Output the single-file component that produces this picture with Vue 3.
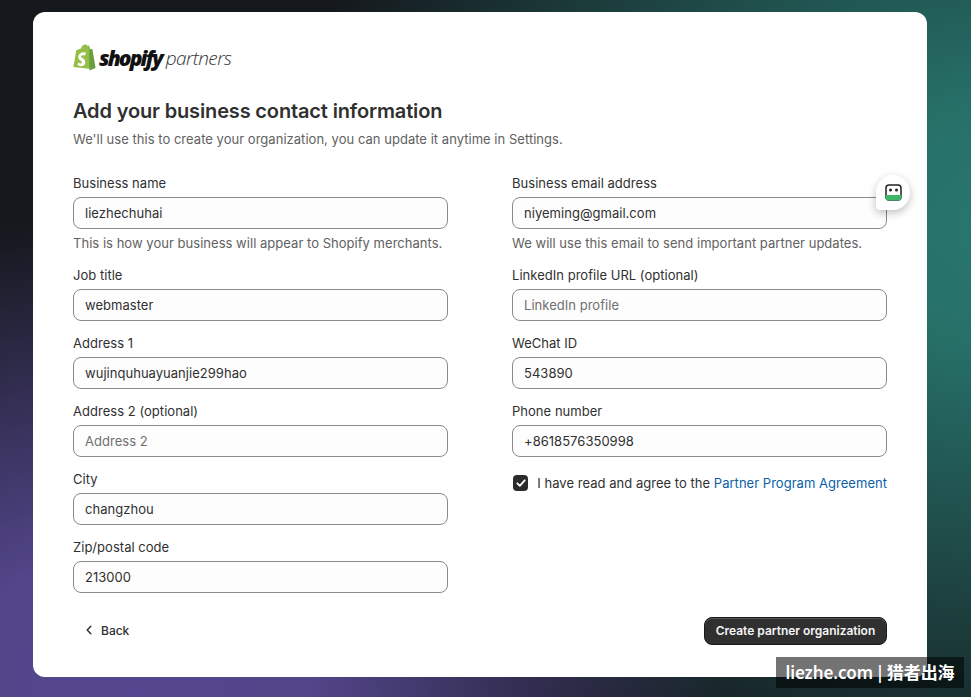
<script setup>
const left = [
  { label: 'Business name', value: 'liezhechuhai', help: 'This is how your business will appear to Shopify merchants.' },
  { label: 'Job title', value: 'webmaster' },
  { label: 'Address 1', value: 'wujinquhuayuanjie299hao' },
  { label: 'Address 2 (optional)', placeholder: 'Address 2' },
  { label: 'City', value: 'changzhou' },
  { label: 'Zip/postal code', value: '213000' },
]
const right = [
  { label: 'Business email address', value: 'niyeming@gmail.com', help: 'We will use this email to send important partner updates.' },
  { label: 'LinkedIn profile URL (optional)', placeholder: 'LinkedIn profile' },
  { label: 'WeChat ID', value: '543890' },
  { label: 'Phone number', value: '+8618576350998' },
]
</script>

<template>
  <div class="page">
    <main class="card">
      <div class="logo">
        <svg class="bag" width="23" height="27" viewBox="0 0 23 27">
          <path d="M3.2 6.2 8 4.6C8.6 2 10.4.5 12.2.5c1 0 1.700.5 2.200 1.300l1.700-.4L18.500 25 .4 23z" fill="#95bf47"/>
          <path d="M16.100 1.400 17 5l2.400.3L22.600 24 16.500 26.500z" fill="#6b9c3e"/>
          <path d="M12.700 9.400l-.8 2.300s-1-.5-2-.4c-1.700.1-1.700 1.100-1.700 1.400.1 1.400 3.900 1.700 4.100 5 .2 2.600-1.400 4.400-3.600 4.500-2.700.2-4.200-1.400-4.200-1.400l.6-2.400s1.500 1.100 2.700 1c.8 0 1-.7 1-1.100-.1-1.800-3.200-1.700-3.400-4.800-.2-2.500 1.500-5 5.100-5.300 1.400-.1 2.200.3 2.200.3z" fill="#fff"/>
        </svg>
        <span class="shopify">shopify</span>
        <span class="partners">partners</span>
      </div>

      <h1>Add your business contact information</h1>
      <p class="sub">We'll use this to create your organization, you can update it anytime in Settings.</p>

      <div class="columns">
        <div class="column">
          <div v-for="f in left" :key="f.label" class="field">
            <label>{{ f.label }}</label>
            <input type="text" :value="f.value" :placeholder="f.placeholder" />
            <p v-if="f.help" class="help">{{ f.help }}</p>
          </div>
        </div>
        <div class="column">
          <div v-for="f in right" :key="f.label" class="field">
            <label>{{ f.label }}</label>
            <input type="text" :value="f.value" :placeholder="f.placeholder" />
            <p v-if="f.help" class="help">{{ f.help }}</p>
          </div>
          <div class="agree">
            <span class="check">
              <svg width="12" height="12" viewBox="0 0 12 12"><path d="M2.300 6.300 4.800 8.800 9.700 3.300" fill="none" stroke="#fff" stroke-width="1.800" stroke-linecap="round" stroke-linejoin="round"/></svg>
            </span>
            <span>I have read and agree to the <a class="link">Partner Program Agreement</a></span>
          </div>
        </div>
      </div>

      <div class="actions">
        <button class="back">
          <svg width="16" height="16" viewBox="0 0 16 16"><path d="M9.800 4.300 6.200 8l3.600 3.700" fill="none" stroke="#303030" stroke-width="1.500" stroke-linecap="round" stroke-linejoin="round"/></svg>
          <span>Back</span>
        </button>
        <button class="primary">Create partner organization</button>
      </div>

      <div class="bot">
        <svg width="17" height="17" viewBox="0 0 17 17">
          <rect x="1" y="1" width="15" height="15" rx="3" fill="#fff" stroke="#222" stroke-width="1.500"/>
          <path d="M.500 11h16v2.500a3 3 0 0 1-3 3h-10a3 3 0 0 1-3-3z" fill="#3fb56b"/>
          <circle cx="5.500" cy="6" r="1.500" fill="#222"/>
          <circle cx="11.500" cy="6" r="1.500" fill="#222"/>
        </svg>
      </div>
    </main>
    <div class="mark">liezhe.com | 猎者出海</div>
  </div>
</template>

<style scoped>
.page {
  position: relative;
  width: 971px;
  height: 697px;
  overflow: hidden;
  box-sizing: border-box;
  padding: 12px 44px 20px 33px;
  font-family: Inter, "Liberation Sans", sans-serif;
  color: #303030;
  background:
    radial-gradient(600px 480px at 130px 697px, #55478f 0%, #524589 30%, rgba(82, 69, 137, 0) 100%),
    radial-gradient(720px 600px at 1000px 225px, #29776f 0%, #267068 20%, rgba(38, 112, 104, 0) 100%),
    #15181d;
}
.card {
  position: relative;
  box-sizing: border-box;
  height: 665px;
  padding: 32px 40px 32px;
  background: #fff;
  border-radius: 12px;
  display: flex;
  flex-direction: column;
}
.logo {
  display: flex;
  align-items: center;
  height: 27px;
  color: #111;
}
.bag { flex: none; margin-right: 3px; }
.shopify {
  font-family: "Open Sans", sans-serif;
  font-weight: 800;
  font-style: italic;
  font-size: 21px;
  letter-spacing: -1.9px;
}
.partners {
  margin-left: 4px;
  font-family: "Open Sans", sans-serif;
  font-weight: 300;
  font-style: italic;
  font-size: 19px;
  letter-spacing: -0.55px;
  color: #333;
}
h1 {
  margin: 26px 0 0;
  font-size: 20px;
  line-height: 28px;
  font-weight: 600;
  letter-spacing: -0.15px;
  color: #303030;
}
.sub {
  margin: 4px 0 0;
  font-size: 13px;
  line-height: 20px;
  letter-spacing: 0.03px;
  color: #616161;
}
.columns {
  display: grid;
  grid-template-columns: 375px 375px;
  column-gap: 64px;
  margin-top: 24px;
}
.column {
  display: flex;
  flex-direction: column;
  gap: 12px;
}
.field { display: flex; flex-direction: column; }
label {
  font-size: 13px;
  line-height: 20px;
  letter-spacing: 0.03px;
  margin-bottom: 4px;
  color: #303030;
}
input {
  box-sizing: border-box;
  width: 100%;
  height: 32px;
  padding: 0 11px;
  border: 1px solid #8a8a8a;
  border-radius: 8px;
  background: #fdfdfd;
  font: inherit;
  font-size: 13px;
  letter-spacing: 0.03px;
  color: #303030;
  outline: none;
}
input::placeholder { color: #6f6f6f; opacity: 1; }
.help {
  margin: 4px 0 0;
  font-size: 13px;
  line-height: 20px;
  letter-spacing: 0.03px;
  color: #616161;
}
.agree {
  display: flex;
  align-items: center;
  gap: 9px;
  margin-top: 4px;
  padding-left: 1px;
  height: 20px;
  font-size: 13px;
  letter-spacing: 0.03px;
  white-space: nowrap;
}
.check {
  display: flex;
  align-items: center;
  justify-content: center;
  width: 16px;
  height: 16px;
  border-radius: 4px;
  background: #2b2b2b;
}
.link { color: #0b5fa8; }
.actions {
  display: flex;
  align-items: center;
  justify-content: space-between;
  margin-top: auto;
  height: 28px;
}
.back {
  display: flex;
  align-items: center;
  gap: 4px;
  padding: 0 8px 2px;
  border: 0;
  background: none;
  font: inherit;
  font-size: 12px;
  font-weight: 500;
  color: #303030;
}
.primary {
  width: 183px;
  height: 28px;
  padding: 0 0 2px;
  border: 1px solid #1a1a1a;
  border-radius: 8px;
  background: #303030;
  box-shadow: inset 0 1px 0 #555;
  font: inherit;
  font-size: 12px;
  font-weight: 600;
  letter-spacing: -0.02px;
  color: #f4f4f4;
}
.bot {
  position: absolute;
  left: 843px;
  top: 163px;
  width: 34px;
  height: 35px;
  display: flex;
  align-items: center;
  justify-content: center;
  background: #fff;
  border-radius: 17px 17px 17px 4px;
  box-shadow: 0 3px 8px rgba(0, 0, 0, 0.25);
}
.mark {
  position: absolute;
  left: 776px;
  top: 657px;
  width: 188px;
  height: 31px;
  line-height: 31px;
  text-align: center;
  background: rgba(0, 0, 0, 0.55);
  color: #fff;
  font-family: "Noto Sans", "Noto Sans CJK SC", sans-serif;
  font-size: 17px;
  font-weight: 600;
  letter-spacing: -0.1px;
  word-spacing: -2px;
  white-space: nowrap;
}
</style>
